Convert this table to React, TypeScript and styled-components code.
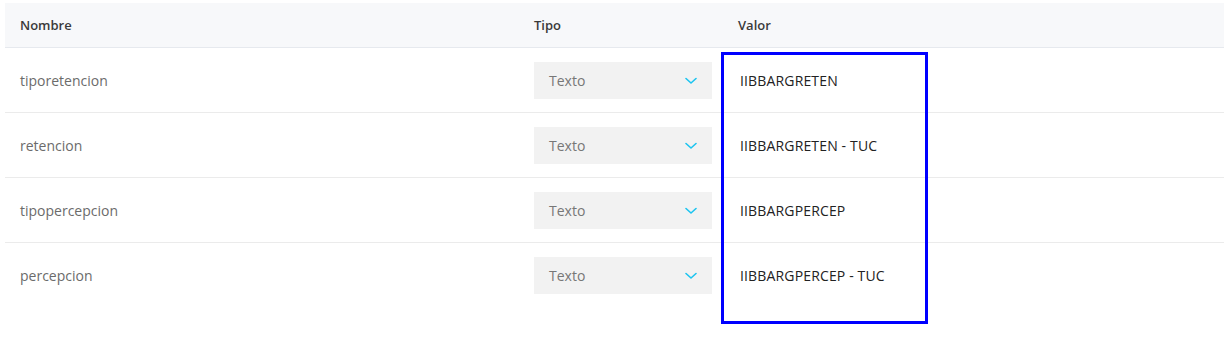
import React from "react";
import styled, { createGlobalStyle } from "styled-components";

const Global = createGlobalStyle`
  html, body { margin: 0; padding: 0; background: #ffffff; }
  body { font-family: "Open Sans", "Liberation Sans", sans-serif; }
`;

const Page = styled.div`
  box-sizing: border-box;
  min-height: 342px;
  padding: 3px 0 0 5px;
`;

const Table = styled.div`
  position: relative;
  display: grid;
  grid-template-columns: 514px 204px 1fr;
`;

const HeadCell = styled.div`
  height: 44px;
  display: flex;
  align-items: center;
  padding: 0 15px;
  background: #f7f8fa;
  border-bottom: 1px solid #e6e9ee;
  color: #3a3a3a;
  font-size: 13px;
  font-weight: 600;
`;

const Cell = styled.div<{ $last?: boolean }>`
  height: 64px;
  display: flex;
  align-items: center;
  padding: 0 15px;
  border-bottom: 1px solid ${(p) => (p.$last ? "transparent" : "#ebebeb")};
  font-size: 14px;
  color: #6b6b6b;
`;

const ValueCell = styled(Cell)`
  padding-left: 17px;
  color: #222222;
  letter-spacing: 0.15px;
`;

const Select = styled.div`
  flex-shrink: 0;
  width: 178px;
  height: 37px;
  box-sizing: border-box;
  background: #f2f2f2;
  display: flex;
  align-items: center;
  justify-content: space-between;
  padding: 1px 15px 0;
  color: #777777;
  font-size: 14px;
`;

const Highlight = styled.div`
  position: absolute;
  left: 716px;
  top: 49px;
  width: 207px;
  height: 272px;
  box-sizing: border-box;
  border: 3px solid #0000ff;
  pointer-events: none;
`;

const Chevron = () => (
  <svg width="12" height="8" viewBox="0 0 12 8" fill="none">
    <path d="M1 1.5 L6 6 L11 1.5" stroke="#1cc4f0" strokeWidth="1.6" strokeLinecap="round" strokeLinejoin="round" />
  </svg>
);

const rows = [
  { name: "tiporetencion", value: "IIBBARGRETEN" },
  { name: "retencion", value: "IIBBARGRETEN - TUC" },
  { name: "tipopercepcion", value: "IIBBARGPERCEP" },
  { name: "percepcion", value: "IIBBARGPERCEP - TUC" },
];

export default function App() {
  return (
    <Page>
      <Global />
      <Table>
        <HeadCell>Nombre</HeadCell>
        <HeadCell>Tipo</HeadCell>
        <HeadCell>Valor</HeadCell>
        {rows.map((r, i) => {
          const last = i === rows.length - 1;
          return (
            <React.Fragment key={r.name}>
              <Cell $last={last}>{r.name}</Cell>
              <Cell $last={last}>
                <Select>
                  <span>Texto</span>
                  <Chevron />
                </Select>
              </Cell>
              <ValueCell $last={last}>{r.value}</ValueCell>
            </React.Fragment>
          );
        })}
        <Highlight />
      </Table>
    </Page>
  );
}
